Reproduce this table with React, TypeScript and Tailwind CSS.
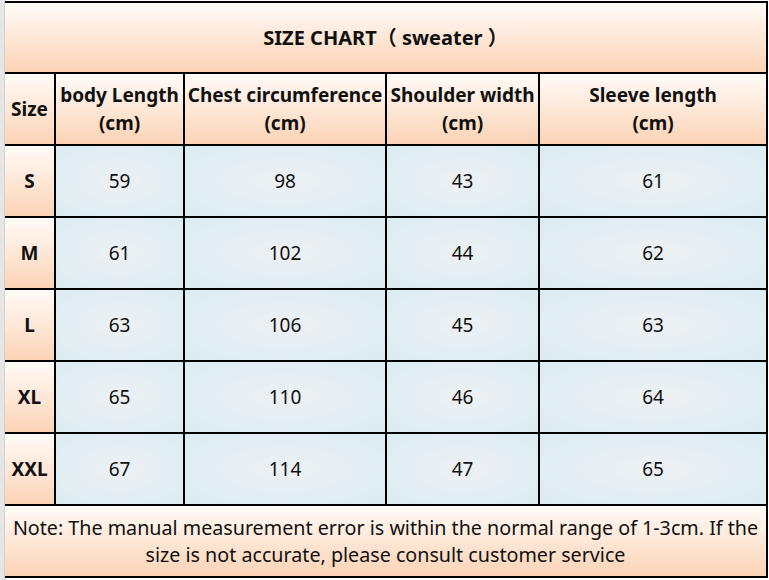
const rows = [
  { size: "S", values: ["59", "98", "43", "61"] },
  { size: "M", values: ["61", "102", "44", "62"] },
  { size: "L", values: ["63", "106", "45", "63"] },
  { size: "XL", values: ["65", "110", "46", "64"] },
  { size: "XXL", values: ["67", "114", "47", "65"] },
]

const headers = [
  ["body Length", "(cm)"],
  ["Chest circumference", "(cm)"],
  ["Shoulder width", "(cm)"],
  ["Sleeve length", "(cm)"],
]

const peach = "bg-linear-to-b from-[#fffbf8] to-[#fbd3b5]"
const blue = "bg-[radial-gradient(ellipse_at_center,#edf0f3_0%,#dbecf1_100%)]"

export default function App() {
  return (
    <div
      className="w-[769px] h-[580px] bg-white flex text-[#111]"
      style={{ fontFamily: '"Noto Sans", "Noto Sans CJK SC", sans-serif' }}
    >
      {/* spreadsheet gutter */}
      <div className="w-[5px] h-full bg-[#e6e6e6] border-r border-[#d2d2d2]" />

      <div className="mt-[1px] h-[577px]">
        <div className="grid grid-cols-[49px_127px_200px_151px_226px] grid-rows-[69px_repeat(7,70px)] gap-[2px] bg-black pt-[2px] pr-[2px] pb-[2px]">
          {/* Title */}
          <div className={`col-span-5 ${peach} flex items-center justify-center font-bold text-[20px] whitespace-pre`}>
            SIZE CHART（ sweater ）
          </div>

          {/* Header row */}
          <div className={`${peach} flex items-center justify-center font-bold text-[19px]`}>Size</div>
          {headers.map(([a, b]) => (
            <div
              key={a}
              className={`${peach} flex flex-col items-center justify-center font-bold text-[19px] leading-[28px] whitespace-nowrap`}
            >
              <span>{a}</span>
              <span>{b}</span>
            </div>
          ))}

          {/* Data rows */}
          {rows.map((r) => (
            <div key={r.size} className="contents">
              <div className={`${peach} flex items-center justify-center font-bold text-[19px]`}>{r.size}</div>
              {r.values.map((v, i) => (
                <div key={i} className={`${blue} flex items-center justify-center text-[19px]`}>
                  {v}
                </div>
              ))}
            </div>
          ))}

          {/* Note */}
          <div className={`col-span-5 ${peach} flex items-center justify-center text-center text-[19.7px] leading-[27px] whitespace-nowrap`}>
            Note: The manual measurement error is within the normal range of 1-3cm. If the
            <br />
            size is not accurate, please consult customer service
          </div>
        </div>
      </div>
    </div>
  )
}
